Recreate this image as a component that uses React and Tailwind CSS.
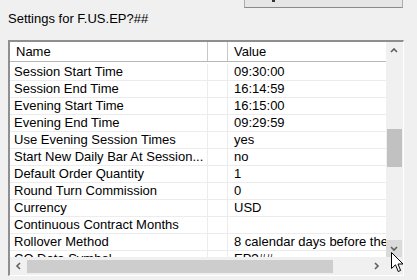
const rows = [
  ['Session Start Time', '09:30:00'],
  ['Session End Time', '16:14:59'],
  ['Evening Start Time', '16:15:00'],
  ['Evening End Time', '09:29:59'],
  ['Use Evening Session Times', 'yes'],
  ['Start New Daily Bar At Session...', 'no'],
  ['Default Order Quantity', '1'],
  ['Round Turn Commission', '0'],
  ['Currency', 'USD'],
  ['Continuous Contract Months', ''],
  ['Rollover Method', '8 calendar days before the expiration'],
  ['CQ Data Symbol', 'EP?##'],
];

const Chevron = ({ dir }) => {
  const pts = {
    up: '1,5 4,2 7,5',
    down: '1,2 4,5 7,2',
    left: '5,1 2,4 5,7',
    right: '2,1 5,4 2,7',
  }[dir];
  return (
    <svg width="8" height="8" viewBox="0 0 8 8">
      <polyline points={pts} fill="none" stroke="#606060" strokeWidth="1.6" />
    </svg>
  );
};

const Cursor = () => (
  <svg className="absolute left-[391px] top-[252px]" width="13" height="21" viewBox="0 0 13 21">
    <path d="M0.5 0.5 L0.5 16.5 L4.5 12.8 L7.2 19.5 L9.6 18.5 L7 12 L12 12 Z" fill="#fff" stroke="#000" strokeWidth="1" strokeLinejoin="miter" />
  </svg>
);

export default function App() {
  return (
    <div
      className="relative w-[417px] h-[280px] overflow-hidden bg-[#f0f0f0] text-[13px] text-black"
      style={{ fontFamily: '"Liberation Sans", Arial, sans-serif' }}
    >
      {/* button cut off at the top */}
      <div className="relative ml-[244px] w-[159px] h-[8px] bg-[#e6e6e6] border-x border-b border-[#adadad] border-b-[#8a8a8a]">
        <span className="absolute left-[27px] top-0 w-[3px] h-[2px] bg-[#333]" />
      </div>

      <div className="mt-[3px] ml-[8px] leading-[15px]">Settings for F.US.EP?##</div>

      {/* property list */}
      <div className="mt-[14px] ml-[8px] w-[396px] border-t-2 border-l-2 border-[#8f8f8f] border-r border-b border-r-white border-b-white">
        <div className="flex h-[233px]">
          <div className="flex flex-col w-[376px]">
            <div className="h-[215px] overflow-hidden bg-white">
              <div className="flex h-[20px] border-b border-[#b8b8b8] leading-[15px]">
                <div className="w-[198px] border-r border-[#c8c8c8] pl-[6px] flex items-center">Name</div>
                <div className="w-[20px] border-r border-[#c8c8c8]" />
                <div className="flex-1 pl-[6px] flex items-center">Value</div>
              </div>
              <div className="pt-[2px]">
                {rows.map(([name, value]) => (
                  <div key={name} className="flex h-[17px] border-b border-[#ececec] leading-[16px]">
                    <div className="w-[198px] border-r border-[#ececec] pl-[4px] whitespace-nowrap overflow-hidden">{name}</div>
                    <div className="w-[20px] border-r border-[#ececec]" />
                    <div className="flex-1 pl-[6px] whitespace-nowrap overflow-hidden">{value}</div>
                  </div>
                ))}
              </div>
            </div>
            {/* horizontal scrollbar */}
            <div className="flex items-center h-[18px] bg-[#f0f0f0]">
              <div className="w-[17px] flex justify-center">
                <Chevron dir="left" />
              </div>
              <div className="w-[306px] h-[13px] bg-[#cdcdcd]" />
              <div className="flex-1 flex justify-end pr-[5px]">
                <Chevron dir="right" />
              </div>
            </div>
          </div>

          {/* vertical scrollbar */}
          <div className="flex flex-col w-[16px] bg-[#f0f0f0]">
            <div className="h-[17px] flex items-center justify-center">
              <Chevron dir="up" />
            </div>
            <div className="h-[70px]" />
            <div className="h-[38px] mx-auto w-[15px] bg-[#c1c1c1]" />
            <div className="h-[73px]" />
            <div className="h-[17px] bg-[#dadada] flex items-center justify-center">
              <Chevron dir="down" />
            </div>
            <div className="flex-1" />
          </div>
        </div>
      </div>

      <Cursor />
    </div>
  );
}
